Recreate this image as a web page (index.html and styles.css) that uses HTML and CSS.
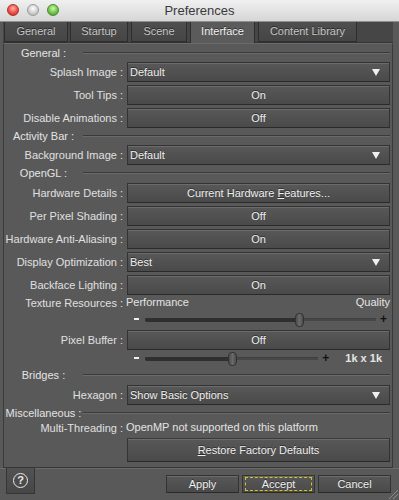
FILE: index.html
```html
<!DOCTYPE html>
<html lang="en">
<head>
  <meta charset="UTF-8">
  <meta name="viewport" content="width=device-width, initial-scale=1.0">
  <title>Preferences</title>
  <link rel="stylesheet" href="styles.css">
</head>
<body>

  <div class="titlebar">
    <div class="lights">
      <span class="light red"></span>
      <span class="light gray"></span>
      <span class="light green"></span>
    </div>
    <span class="title">Preferences</span>
  </div>

  <div class="tabs">
    <div class="tab tab-general">General</div>
    <div class="tab tab-startup">Startup</div>
    <div class="tab tab-scene">Scene</div>
    <div class="tab tab-interface active">Interface</div>
    <div class="tab tab-library">Content Library</div>
  </div>

  <div class="panel">
    <div class="heading first"><span>General :</span><div class="line"></div></div>
    <div class="row tight">
      <div class="label">Splash Image :</div>
      <div class="ctl select">Default<span class="arrow"></span></div>
    </div>
    <div class="row">
      <div class="label">Tool Tips :</div>
      <div class="ctl btn">On</div>
    </div>
    <div class="row">
      <div class="label">Disable Animations :</div>
      <div class="ctl btn">Off</div>
    </div>

    <div class="heading"><span>Activity Bar :</span><div class="line"></div></div>
    <div class="row tight">
      <div class="label">Background Image :</div>
      <div class="ctl select">Default<span class="arrow"></span></div>
    </div>

    <div class="heading"><span>OpenGL :</span><div class="line"></div></div>
    <div class="row">
      <div class="label">Hardware Details :</div>
      <div class="ctl btn"><span>Current Hardware <u>F</u>eatures...</span></div>
    </div>
    <div class="row">
      <div class="label">Per Pixel Shading :</div>
      <div class="ctl btn">Off</div>
    </div>
    <div class="row">
      <div class="label">Hardware Anti-Aliasing :</div>
      <div class="ctl btn">On</div>
    </div>
    <div class="row">
      <div class="label">Display Optimization :</div>
      <div class="ctl select">Best<span class="arrow"></span></div>
    </div>
    <div class="row">
      <div class="label">Backface Lighting :</div>
      <div class="ctl btn">On</div>
    </div>
    <div class="text-row">
      <div class="label">Texture Resources :</div>
      <div class="ctl range-labels"><span>Performance</span><span>Quality</span></div>
    </div>
    <div class="slider-row">
      <div class="ctl slider">
        <span class="minus"></span>
        <div class="track">
          <div class="fill" style="width: 66.5%"></div>
          <div class="thumb" style="left: 66.5%"></div>
        </div>
        <span class="plus">+</span>
      </div>
    </div>
    <div class="row loose">
      <div class="label">Pixel Buffer :</div>
      <div class="ctl btn">Off</div>
    </div>
    <div class="slider-row second">
      <div class="ctl slider">
        <span class="minus"></span>
        <div class="track">
          <div class="fill" style="width: 50%"></div>
          <div class="thumb" style="left: 50%"></div>
        </div>
        <span class="plus">+</span>
        <span class="value">1k x 1k</span>
      </div>
    </div>

    <div class="heading spaced"><span>Bridges :</span><div class="line"></div></div>
    <div class="row">
      <div class="label">Hexagon :</div>
      <div class="ctl select">Show Basic Options<span class="arrow"></span></div>
    </div>

    <div class="heading"><span>Miscellaneous :</span><div class="line"></div></div>
    <div class="text-row info">
      <div class="label">Multi-Threading :</div>
      <div class="ctl">OpenMP not supported on this platform</div>
    </div>
    <div class="row restore">
      <div class="label"></div>
      <div class="ctl btn"><span><u>R</u>estore Factory Defaults</span></div>
    </div>
  </div>

  <div class="footer">
    <div class="help"><span>?</span></div>
    <div class="actions">
      <div class="btn">Apply</div>
      <div class="btn focused"><span>Accept</span></div>
      <div class="btn">Cancel</div>
    </div>
    <div class="grip"></div>
  </div>

</body>
</html>
```

FILE: styles.css
```css
* {
  box-sizing: border-box;
  margin: 0;
  padding: 0;
}

body {
  width: 399px;
  height: 500px;
  overflow: hidden;
  background: #595959;
  font-family: "Liberation Sans", Arial, sans-serif;
  font-size: 11px;
  color: #e4e4e4;
  position: relative;
}

/* title bar */
.titlebar {
  height: 22px;
  background: linear-gradient(#f0f0f0, #d6d6d6);
  border-bottom: 1px solid #8e8e8e;
  display: flex;
  align-items: center;
  justify-content: center;
  position: relative;
}

.lights {
  position: absolute;
  left: 7px;
  top: 4px;
  display: flex;
  gap: 8px;
}

.light {
  width: 12px;
  height: 12px;
  border-radius: 50%;
}

.red {
  background: radial-gradient(circle at 50% 35%, #ffb0a8, #ec4f44 55%, #b8261d);
  border: 1px solid #a8332c;
}

.gray {
  background: radial-gradient(circle at 50% 35%, #ffffff, #d0d0d0 55%, #a8a8a8);
  border: 1px solid #9a9a9a;
}

.green {
  background: radial-gradient(circle at 50% 35%, #d4f5a8, #6fc64a 55%, #3e8f22);
  border: 1px solid #4a8a30;
}

.title {
  font-size: 13px;
  color: #3a3a3a;
  margin-top: -1px;
}

/* tabs */
.tabs {
  display: flex;
  gap: 3px;
  margin: 0 6px 0 3px;
  height: 21px;
  background: #464646;
  border-bottom: 1px solid #333;
  padding-left: 1px;
}

.tab {
  line-height: 19px;
  text-align: center;
  color: #c6c6c6;
  background: linear-gradient(#4f4f4f, #454545);
  border: 1px solid #2e2e2e;
  border-top: none;
  text-shadow: 0 -1px 0 rgba(0, 0, 0, 0.5);
}

.tab-general { width: 64px; margin-right: -1px; }
.tab-startup { width: 58px; }
.tab-scene { width: 56px; }
.tab-interface { width: 65px; }
.tab-library { width: 99px; }

.tab.active {
  background: #5b5b5b;
  color: #f2f2f2;
  height: 21px;
  border-bottom: none;
}

/* panel */
.panel {
  margin-left: 3px;
  width: 390px;
  border-left: 1px solid #3a3a3a;
  border-right: 1px solid #3a3a3a;
  border-top: 1px solid #6a6a6a;
  border-bottom: 1px solid #363636;
  padding: 0 2px 5px 0;
  height: 425px;
}

.heading {
  display: flex;
  align-items: center;
  height: 14px;
  margin-top: 1px;
}

.heading.first {
  margin-top: 2px;
}

.heading.spaced {
  margin-top: 3px;
}

.heading span {
  width: 79px;
  text-align: center;
  white-space: nowrap;
}

.heading .line {
  flex: 1;
  border-top: 1px solid #3a3a3a;
  border-bottom: 1px solid #6a6a6a;
  margin-top: -1px;
}

.row {
  display: flex;
  align-items: center;
  height: 20px;
  margin-top: 3px;
}

.row.tight {
  margin-top: 2px;
}

.row.loose {
  margin-top: 4px;
}

.label {
  width: 119px;
  text-align: right;
  white-space: nowrap;
  color: #e0e0e0;
}

.ctl {
  flex: 1;
  margin-left: 4px;
  height: 100%;
}

.btn,
.select {
  background: linear-gradient(#585858, #4a4a4a);
  border: 1px solid #333;
  border-bottom-color: #2a2a2a;
  box-shadow: inset 0 1px 0 rgba(255, 255, 255, 0.12);
  color: #efefef;
  text-shadow: 0 -1px 0 rgba(0, 0, 0, 0.45);
  display: flex;
  align-items: center;
  justify-content: center;
}

.select {
  justify-content: space-between;
  padding: 0 9px 0 2px;
}

.arrow {
  width: 0;
  height: 0;
  border-left: 4px solid transparent;
  border-right: 4px solid transparent;
  border-top: 7px solid #f0f0f0;
}

.text-row {
  display: flex;
  align-items: center;
  height: 14px;
  margin-top: 1px;
}

.range-labels {
  display: flex;
  justify-content: space-between;
  margin-left: 3px;
}

.info .ctl {
  margin-left: 3px;
}

.slider-row {
  height: 14px;
  margin-top: 2px;
  display: flex;
  padding-left: 123px;
}

.slider-row.second {
  margin-top: 1px;
}

.slider {
  display: flex;
  align-items: center;
}

.minus {
  width: 5px;
  height: 2px;
  background: #f0f0f0;
  margin-left: 3px;
}

.track {
  flex: 1;
  height: 3px;
  margin: 0 4px 0 6px;
  background: #474747;
  border-top: 1px solid #404040;
  position: relative;
}

.fill {
  height: 4px;
  margin-top: -1px;
  background: #2f2f2f;
  border-radius: 2px;
}

.thumb {
  position: absolute;
  top: -6px;
  width: 9px;
  height: 14px;
  margin-left: -4px;
  border-radius: 4px;
  background: linear-gradient(90deg, #4c4c4c, #6a6a6a 50%, #4c4c4c);
  border: 1px solid #333;
}

.plus {
  color: #111;
  font-weight: bold;
  font-size: 12px;
  width: 7px;
  margin-right: 3px;
}

.value {
  font-weight: bold;
  margin: 0 8px 0 13px;
}

.info {
  margin-top: 1px;
  height: 14px;
}

.restore {
  height: 24px;
  margin-top: 3px;
}

.restore .ctl {
  border-top: 1px solid #3a3a3a;
}

/* footer */
.footer {
  display: flex;
  align-items: flex-start;
  height: 32px;
  padding: 0 8px 0 6px;
  border-top: 1px solid #6a6a6a;
  position: relative;
}

.help {
  width: 29px;
  height: 27px;
  margin-top: -2px;
  background: linear-gradient(#525252, #474747);
  border: 1px solid #363636;
  display: flex;
  align-items: center;
  justify-content: center;
}

.help span {
  width: 15px;
  height: 15px;
  border: 1.5px solid #eaeaea;
  border-radius: 50%;
  font-size: 11px;
  font-weight: bold;
  line-height: 12px;
  text-align: center;
  color: #eaeaea;
}

.actions {
  margin-left: auto;
  display: flex;
  gap: 3px;
  margin-top: 6px;
}

.actions .btn {
  width: 73px;
  height: 18px;
}

.focused span {
  border: 1px dashed #d8c320;
  width: 67px;
  height: 14px;
  display: flex;
  align-items: center;
  justify-content: center;
}

.grip {
  position: absolute;
  right: 1px;
  bottom: 1px;
  width: 9px;
  height: 9px;
  background: linear-gradient(135deg, transparent 45%, #8a8a8a 46%, #8a8a8a 52%, transparent 53%, transparent 70%, #8a8a8a 71%, #8a8a8a 77%, transparent 78%);
}
```
